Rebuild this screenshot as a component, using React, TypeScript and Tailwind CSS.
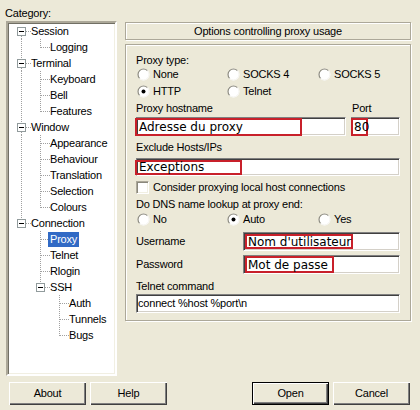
import React from 'react';
import clsx from 'clsx';

type Row = {
  label: string;
  guides: (' ' | 'I')[];
  own: 'r' | 'T' | 'L';
  box?: boolean;
  selected?: boolean;
};

const rows: Row[] = [
  { label: 'Session', guides: [], own: 'r', box: true },
  { label: 'Logging', guides: ['I'], own: 'L' },
  { label: 'Terminal', guides: [], own: 'T', box: true },
  { label: 'Keyboard', guides: ['I'], own: 'T' },
  { label: 'Bell', guides: ['I'], own: 'T' },
  { label: 'Features', guides: ['I'], own: 'L' },
  { label: 'Window', guides: [], own: 'T', box: true },
  { label: 'Appearance', guides: ['I'], own: 'T' },
  { label: 'Behaviour', guides: ['I'], own: 'T' },
  { label: 'Translation', guides: ['I'], own: 'T' },
  { label: 'Selection', guides: ['I'], own: 'T' },
  { label: 'Colours', guides: ['I'], own: 'L' },
  { label: 'Connection', guides: [], own: 'L', box: true },
  { label: 'Proxy', guides: [' '], own: 'T', selected: true },
  { label: 'Telnet', guides: [' '], own: 'T' },
  { label: 'Rlogin', guides: [' '], own: 'T' },
  { label: 'SSH', guides: [' '], own: 'L', box: true },
  { label: 'Auth', guides: [' ', ' '], own: 'T' },
  { label: 'Tunnels', guides: [' ', ' '], own: 'T' },
  { label: 'Bugs', guides: [' ', ' '], own: 'L' },
];

const dot = { stroke: '#a0a0a0', strokeDasharray: '1 1', shapeRendering: 'crispEdges' as const };

function Guide({ kind }: { kind: ' ' | 'I' }) {
  return (
    <svg width="19" height="16" className="shrink-0">
      {kind === 'I' && <line x1="9.5" y1="0" x2="9.5" y2="16" {...dot} />}
    </svg>
  );
}

function Own({ own, box }: { own: Row['own']; box?: boolean }) {
  const up = own !== 'r';
  const down = own !== 'L';
  return (
    <svg width="19" height="16" className="shrink-0">
      {box ? (
        <>
          {up && <line x1="9.5" y1="0" x2="9.5" y2="4" {...dot} />}
          {down && <line x1="9.5" y1="13" x2="9.5" y2="16" {...dot} />}
          <line x1="14" y1="8.5" x2="19" y2="8.5" {...dot} />
          <rect x="5.5" y="4.5" width="8" height="8" fill="#fff" stroke="#919b9c" shapeRendering="crispEdges" />
          <line x1="7" y1="8.5" x2="12" y2="8.5" stroke="#000" shapeRendering="crispEdges" />
        </>
      ) : (
        <>
          <line x1="9.5" y1="0" x2="9.5" y2={down ? 16 : 9} {...dot} />
          <line x1="10" y1="8.5" x2="19" y2="8.5" {...dot} />
        </>
      )}
    </svg>
  );
}

function Radio({ checked }: { checked?: boolean }) {
  return (
    <svg width="13" height="13" viewBox="0 0 13 13" className="shrink-0">
      <circle cx="6.5" cy="6.5" r="6" fill="#fff" />
      <path d="M2.61 10.39 A5.5 5.5 0 0 1 10.39 2.61" fill="none" stroke="#8a887c" strokeWidth="1.2" />
      <path d="M10.39 2.61 A5.5 5.5 0 0 1 2.61 10.39" fill="none" stroke="#f4f3ee" />
      {checked && <circle cx="6.5" cy="6.5" r="2" fill="#000" />}
    </svg>
  );
}

function RadioItem({ label, checked }: { label: string; checked?: boolean }) {
  return (
    <div className="flex items-center">
      <span className="ml-px flex">
        <Radio checked={checked} />
      </span>
      <span className="ml-[3px] leading-[13px]">{label}</span>
    </div>
  );
}

function Field({ className, children }: { className?: string; children?: React.ReactNode }) {
  return (
    <div
      className={clsx(
        'flex items-center bg-white border border-t-[#808080] border-l-[#808080] border-r-white border-b-white shadow-[inset_1px_1px_0_#404040,inset_-1px_-1px_0_#d4d0c8]',
        className
      )}
    >
      {children}
    </div>
  );
}

function Marked({ className, children }: { className?: string; children: React.ReactNode }) {
  return (
    <span
      className={clsx(
        "flex items-center border-2 border-[#c8202a] font-['DejaVu_Sans',sans-serif] text-[12px] tracking-normal leading-none whitespace-nowrap",
        className
      )}
    >
      {children}
    </span>
  );
}

function Btn({ label, def }: { label: string; def?: boolean }) {
  return (
    <button
      className={clsx(
        'h-[23px] w-[77px] bg-[#ece9d8] leading-[13px] shadow-[inset_1px_1px_0_#fff,inset_-1px_-1px_0_#404040,inset_-2px_-2px_0_#808080]',
        def && 'border border-black'
      )}
    >
      {label}
    </button>
  );
}

export default function App() {
  return (
    <div className="w-[420px] h-[410px] overflow-hidden bg-[#ece9d8] pl-[6px] pt-[5px] font-['Liberation_Sans',Arial,sans-serif] text-[11px] tracking-[-0.2px] text-black">
      <div className="flex">
        <div className="w-[111px] flex flex-col">
          <div className="h-[16px] leading-[16px] -ml-px">Category:</div>
          <div className="h-[355px] bg-white border-2 border-t-[#aca899] border-l-[#aca899] border-r-white border-b-white shadow-[inset_1px_1px_0_#716f64,inset_-1px_-1px_0_#f1efe2] overflow-hidden">
            <div className="pl-[4px]">
              {rows.map((r) => (
                <div key={r.label} className="flex h-[16px] items-center">
                  {r.guides.map((g, i) => (
                    <Guide key={i} kind={g} />
                  ))}
                  <Own own={r.own} box={r.box} />
                  <span
                    className={clsx(
                      '-ml-[2px] px-[2px] h-[15px] leading-[15px] whitespace-nowrap',
                      r.selected && 'bg-[#316ac5] text-white'
                    )}
                  >
                    {r.label}
                  </span>
                </div>
              ))}
            </div>
          </div>
        </div>

        <div className="ml-[8px] w-[286px] pt-[17px] flex flex-col">
          <div className="h-[18px] flex items-center justify-center border border-[#aca899] shadow-[inset_1px_1px_0_#fff,1px_1px_0_#fff]">
            Options controlling proxy usage
          </div>
          <div className="mt-[4px] h-[277px] border border-[#aca899] shadow-[inset_1px_1px_0_#fff,1px_1px_0_#fff] pl-[10px] pr-[10px] pt-[9px] flex flex-col">
            <div className="h-[13px] leading-[13px]">Proxy type:</div>
            <div className="h-[15px] grid grid-cols-[90px_91px_1fr] items-center">
              <RadioItem label="None" />
              <RadioItem label="SOCKS 4" />
              <RadioItem label="SOCKS 5" />
            </div>
            <div className="h-[18px] grid grid-cols-[90px_91px_1fr] items-center">
              <RadioItem label="HTTP" checked />
              <RadioItem label="Telnet" />
            </div>
            <div className="h-[17px] grid grid-cols-[215px_1fr] items-center leading-[13px]">
              <span>Proxy hostname</span>
              <span className="pl-px">Port</span>
            </div>
            <div className="h-[19px] flex gap-[5px]">
              <Field className="w-[210px]">
                <Marked className="-ml-[2px] h-[18px] w-[167px] pl-[2px]">Adresse du proxy</Marked>
              </Field>
              <Field className="flex-1">
                <Marked className="-ml-[1px] h-[18px] w-[17px] pl-px text-[11px]">80</Marked>
              </Field>
            </div>
            <div className="h-[22px] flex items-center leading-[13px]">Exclude Hosts/IPs</div>
            <Field className="h-[18px]">
              <Marked className="-ml-[2px] h-[15px] w-[107px] pl-[2px]">Exceptions</Marked>
            </Field>
            <div className="h-[22px] flex items-center">
              <span className="w-[13px] h-[13px] bg-white border border-t-[#aca899] border-l-[#aca899] border-r-white border-b-white shadow-[inset_1px_1px_0_#8a887c,inset_-1px_-1px_0_#f1efe2]" />
              <span className="ml-[4px] leading-[13px]">Consider proxying local host connections</span>
            </div>
            <div className="h-[13px] leading-[13px]">Do DNS name lookup at proxy end:</div>
            <div className="h-[16px] grid grid-cols-[90px_91px_1fr] items-center">
              <RadioItem label="No" />
              <RadioItem label="Auto" checked />
              <RadioItem label="Yes" />
            </div>
            <div className="mt-[5px] h-[19px] flex items-center">
              <span className="w-[107px] leading-[13px]">Username</span>
              <Field className="flex-1 h-[19px]">
                <Marked className="ml-[1px] h-[15px] w-[108px] pl-px">Nom d'utilisateur</Marked>
              </Field>
            </div>
            <div className="mt-[4px] h-[19px] flex items-center">
              <span className="w-[107px] leading-[13px]">Password</span>
              <Field className="flex-1 h-[19px]">
                <Marked className="ml-[1px] h-[17px] w-[89px] pl-px">Mot de passe</Marked>
              </Field>
            </div>
            <div className="h-[20px] flex items-end">
              <span className="leading-[13px] mb-px">Telnet command</span>
            </div>
            <Field className="h-[19px]">
              <span className="pl-px leading-[13px] whitespace-nowrap">connect %host %port\n</span>
            </Field>
          </div>
        </div>
      </div>

      <div className="mt-[6px] ml-[3px] mr-[10px] flex">
        <Btn label="About" />
        <span className="ml-[4px]">
          <Btn label="Help" />
        </span>
        <span className="ml-auto">
          <Btn label="Open" def />
        </span>
        <span className="ml-[4px]">
          <Btn label="Cancel" />
        </span>
      </div>
    </div>
  );
}
